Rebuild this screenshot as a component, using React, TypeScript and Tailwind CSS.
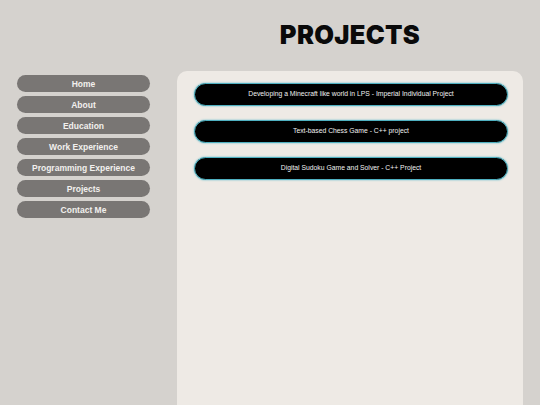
const NAV_ITEMS = [
  'Home',
  'About',
  'Education',
  'Work Experience',
  'Programming Experience',
  'Projects',
  'Contact Me',
];

const PROJECTS = [
  'Developing a Minecraft like world in LPS - Imperial Individual Project',
  'Text-based Chess Game - C++ project',
  'Digital Sudoku Game and Solver - C++ Project',
];

export default function App() {
  return (
    <div className="w-[540px] h-[405px] overflow-hidden bg-[#d5d2ce] font-['Liberation_Sans',Arial,sans-serif]">
      <div className="flex h-full">
        {/* Side navigation */}
        <nav className="w-[177px] shrink-0 pl-[17px] pr-[27px] pt-[75px] flex flex-col gap-1">
          {NAV_ITEMS.map((item) => (
            <a
              key={item}
              href="#"
              className="h-[17px] pt-[1px] rounded-full bg-[#797674] text-[#f2f0ee] text-[8.5px] font-bold flex items-center justify-center"
            >
              {item}
            </a>
          ))}
        </nav>

        {/* Main column */}
        <div className="w-[346px] shrink-0 flex flex-col">
          <h1 className="h-[71px] flex items-center justify-center pb-[1px] font-['Inter',sans-serif] font-black text-[25.5px] tracking-[0.3px] text-[#0a0a0a]">
            PROJECTS
          </h1>
          <main className="flex-1 rounded-t-[10px] bg-[#eeeae5] pl-[17px] pr-[15px] pt-[12px] flex flex-col gap-[14px]">
            {PROJECTS.map((title) => (
              <a
                key={title}
                href="#"
                className="h-[23px] rounded-full bg-black border-[1.5px] border-[#4fb0c0] shadow-[0_0_2px_#5ab8c8] text-[#f0f0f0] text-[6.8px] flex items-center justify-center"
              >
                {title}
              </a>
            ))}
          </main>
        </div>
      </div>
    </div>
  );
}
